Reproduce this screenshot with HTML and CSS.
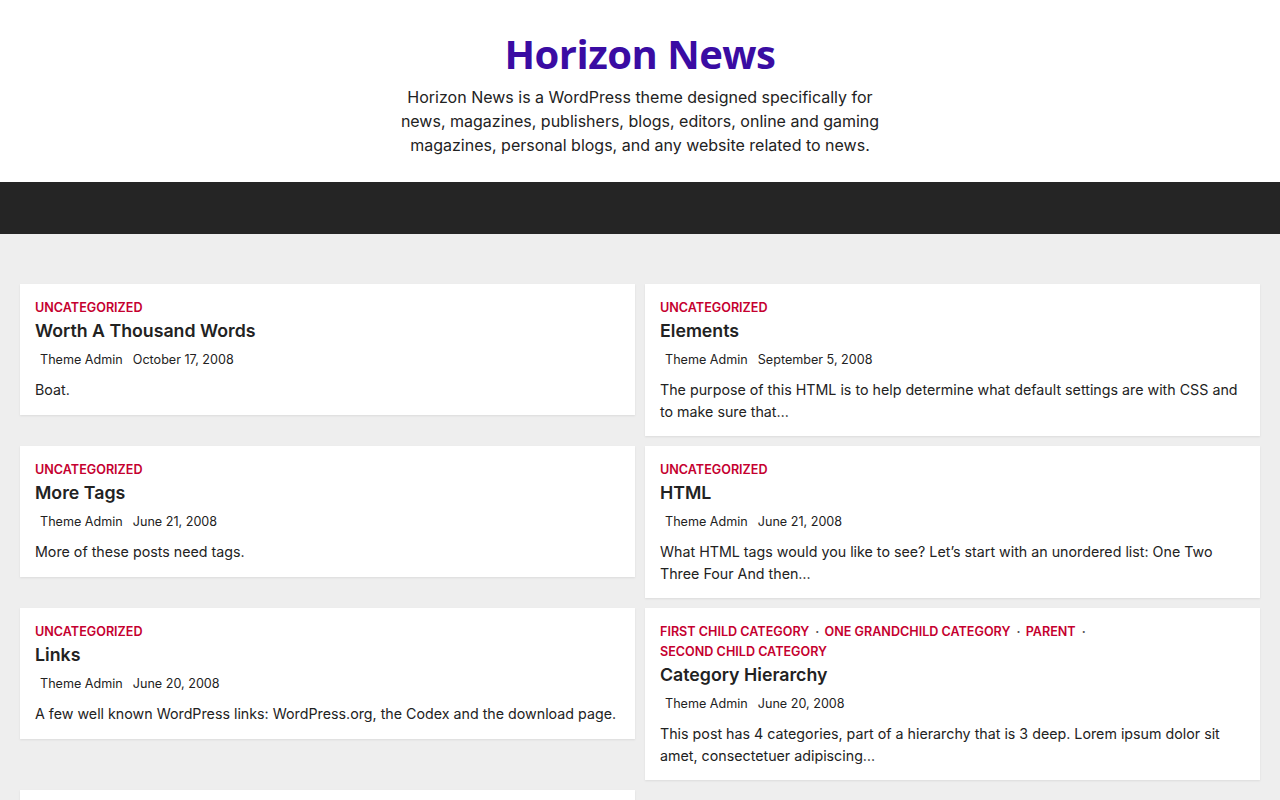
FILE: index.html
```html
<!DOCTYPE html>
<html lang="en">
<head>
<meta charset="utf-8">
<title>Horizon News</title>
<link rel="stylesheet" href="styles.css">
</head>
<body>
<header class="site-header">
  <h1 class="site-title">Horizon News</h1>
  <p class="site-desc">Horizon News is a WordPress theme designed specifically for news, magazines, publishers, blogs, editors, online and gaming magazines, personal blogs, and any website related to news.</p>
</header>
<nav class="main-nav"></nav>
<main class="content">
  <div class="grid">
    <article class="card">
      <div class="cats"><span class="cat-item"><a class="cat">Uncategorized</a></span></div>
      <h2 class="card-title">Worth A Thousand Words</h2>
      <div class="meta"><span class="author">Theme Admin</span><span class="date">October 17, 2008</span></div>
      <p class="excerpt">Boat.</p>
    </article>
    <article class="card">
      <div class="cats"><span class="cat-item"><a class="cat">Uncategorized</a></span></div>
      <h2 class="card-title">Elements</h2>
      <div class="meta"><span class="author">Theme Admin</span><span class="date">September 5, 2008</span></div>
      <p class="excerpt">The purpose of this HTML is to help determine what default settings are with CSS and to make sure that…</p>
    </article>
    <article class="card">
      <div class="cats"><span class="cat-item"><a class="cat">Uncategorized</a></span></div>
      <h2 class="card-title">More Tags</h2>
      <div class="meta"><span class="author">Theme Admin</span><span class="date">June 21, 2008</span></div>
      <p class="excerpt">More of these posts need tags.</p>
    </article>
    <article class="card">
      <div class="cats"><span class="cat-item"><a class="cat">Uncategorized</a></span></div>
      <h2 class="card-title">HTML</h2>
      <div class="meta"><span class="author">Theme Admin</span><span class="date">June 21, 2008</span></div>
      <p class="excerpt">What HTML tags would you like to see? Let’s start with an unordered list: One Two Three Four And then…</p>
    </article>
    <article class="card">
      <div class="cats"><span class="cat-item"><a class="cat">Uncategorized</a></span></div>
      <h2 class="card-title">Links</h2>
      <div class="meta"><span class="author">Theme Admin</span><span class="date">June 20, 2008</span></div>
      <p class="excerpt">A few well known WordPress links: WordPress.org, the Codex and the download page.</p>
    </article>
    <article class="card">
      <div class="cats"><span class="cat-item"><a class="cat">First Child Category</a><span class="sep">·</span></span> <span class="cat-item"><a class="cat">One Grandchild Category</a><span class="sep">·</span></span> <span class="cat-item"><a class="cat">Parent</a><span class="sep">·</span></span> <span class="cat-item"><a class="cat">Second Child Category</a></span></div>
      <h2 class="card-title">Category Hierarchy</h2>
      <div class="meta"><span class="author">Theme Admin</span><span class="date">June 20, 2008</span></div>
      <p class="excerpt">This post has 4 categories, part of a hierarchy that is 3 deep. Lorem ipsum dolor sit amet, consectetuer adipiscing…</p>
    </article>
    <article class="card card-empty"></article>
  </div>
</main>
</body>
</html>
```

FILE: styles.css
```css
* { box-sizing: border-box; }
html, body { margin: 0; padding: 0; }
body {
  font-family: Inter, "Liberation Sans", sans-serif;
  color: #222;
  background: #eeeeee;
}
.site-header {
  background: #fff;
  text-align: center;
  padding: 28px 20px 24px;
}
.site-title {
  margin: 0;
  font-family: "Open Sans", "Noto Sans", sans-serif;
  font-weight: 700;
  font-size: 40px;
  line-height: 52px;
  color: #3a0ca3;
  letter-spacing: -0.5px;
}
.site-desc {
  margin: 5px auto 0;
  max-width: 500px;
  font-size: 16px;
  line-height: 24px;
  color: #222;
  padding-bottom: 1px;
}
.main-nav {
  height: 52px;
  background: #252525;
}
.content {
  padding: 50px 20px 0;
}
.grid {
  display: grid;
  grid-template-columns: 1fr 1fr;
  gap: 10px;
  align-items: start;
}
.card {
  background: #fff;
  padding: 14px 15px 14px;
  box-shadow: 0 1px 2px rgba(0, 0, 0, 0.08);
}
.card-empty { height: 40px; }
.cats {
  font-size: 12.6px;
  line-height: 20px;
  font-weight: 600;
  text-transform: uppercase;
  color: #c5002f;
}
.cat-item { white-space: nowrap; }
.cat { color: #c5002f; }
.sep {
  display: inline-block;
  margin: 0 2px 0 6px;
  color: #555;
}
.card-title {
  margin: 0;
  font-size: 17.75px;
  line-height: 26px;
  font-weight: 600;
  color: #222;
}
.meta {
  margin-top: 6px;
  font-size: 12.6px;
  line-height: 20px;
  color: #222;
  padding-left: 5px;
  display: flex;
  gap: 10px;
}
.excerpt {
  margin: 9px 0 0;
  font-size: 14.25px;
  line-height: 21.5px;
  color: #222;
}
```
